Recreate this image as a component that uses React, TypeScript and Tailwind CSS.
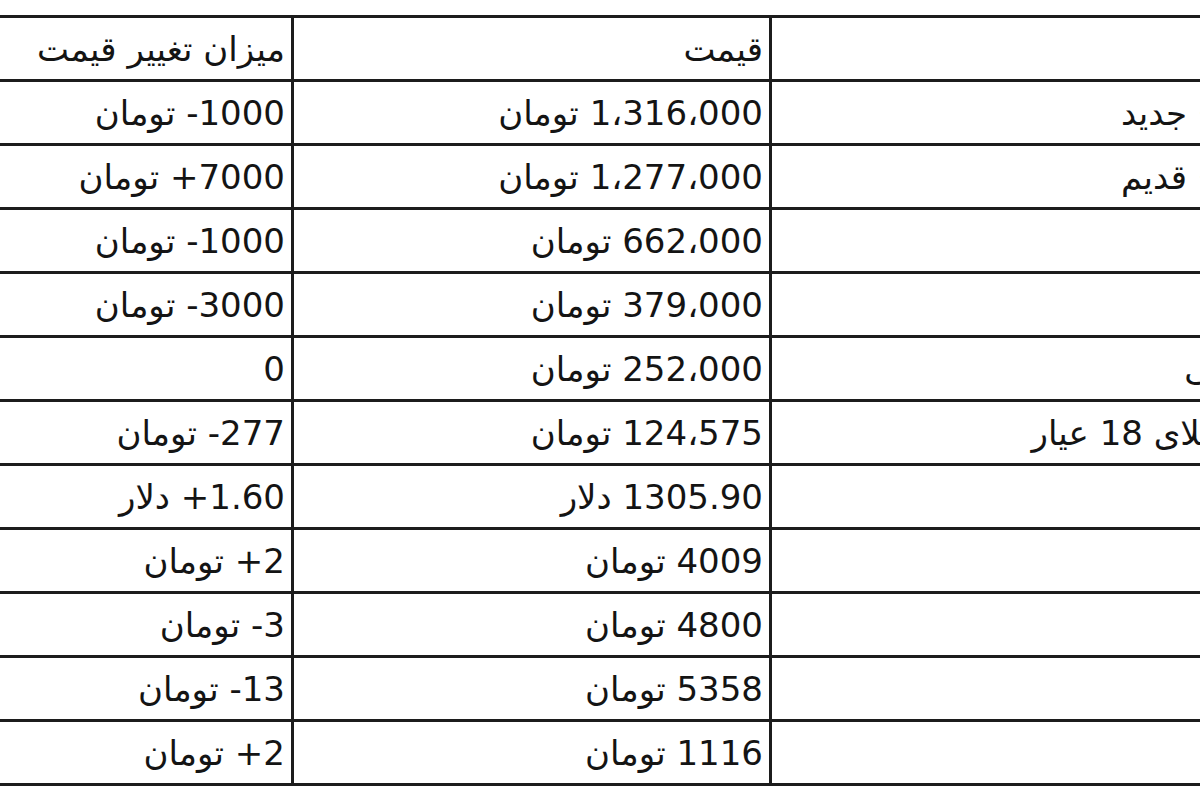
import React from "react";

type Row = { name: string; price: string; change: string };

const rows: Row[] = [
  { name: "سکه طرح جدید", price: "1،316،000 تومان", change: "1000- تومان" },
  { name: "سکه طرح قدیم", price: "1،277،000 تومان", change: "7000+ تومان" },
  { name: "نیم سکه", price: "662،000 تومان", change: "1000- تومان" },
  { name: "ربع سکه", price: "379،000 تومان", change: "3000- تومان" },
  { name: "سکه گرمی", price: "252،000 تومان", change: "0" },
  { name: "هر گرم طلای 18 عیار", price: "124،575 تومان", change: "277- تومان" },
  { name: "انس طلا", price: "1305.90 دلار", change: "1.60+ دلار" },
  { name: "دلار", price: "4009 تومان", change: "2+ تومان" },
  { name: "یورو", price: "4800 تومان", change: "3- تومان" },
  { name: "پوند", price: "5358 تومان", change: "13- تومان" },
  { name: "درهم", price: "1116 تومان", change: "2+ تومان" },
];

function Cell({ children, className }: { children: React.ReactNode; className: string }) {
  return (
    <div className={`flex items-center justify-end pr-[6px] ${className}`}>
      <span dir="rtl" className="whitespace-nowrap">
        {children}
      </span>
    </div>
  );
}

export default function App() {
  return (
    <div className="w-[1200px] h-[800px] overflow-hidden bg-white pt-[15px] text-[34px] leading-none text-[#141414] font-[family-name:DejaVu_Sans,sans-serif]">
      <div className="w-[1400px] flex flex-col border-t-[3px] border-[#1c1c1c]">
        <div className="flex h-[64px] border-b-[3px] border-[#1c1c1c]">
          <Cell className="w-[294px] shrink-0 border-r-[3px] border-[#1c1c1c]">میزان تغییر قیمت</Cell>
          <Cell className="w-[478px] shrink-0 border-r-[3px] border-[#1c1c1c]">قیمت</Cell>
          <Cell className="w-[576px] shrink-0">نام</Cell>
        </div>
        {rows.map((r, i) => (
          <div key={i} className="flex h-[64px] border-b-[3px] border-[#1c1c1c]">
            <Cell className="w-[294px] shrink-0 border-r-[3px] border-[#1c1c1c]">{r.change}</Cell>
            <Cell className="w-[478px] shrink-0 border-r-[3px] border-[#1c1c1c]">{r.price}</Cell>
            <Cell className="w-[576px] shrink-0">{r.name}</Cell>
          </div>
        ))}
      </div>
    </div>
  );
}
